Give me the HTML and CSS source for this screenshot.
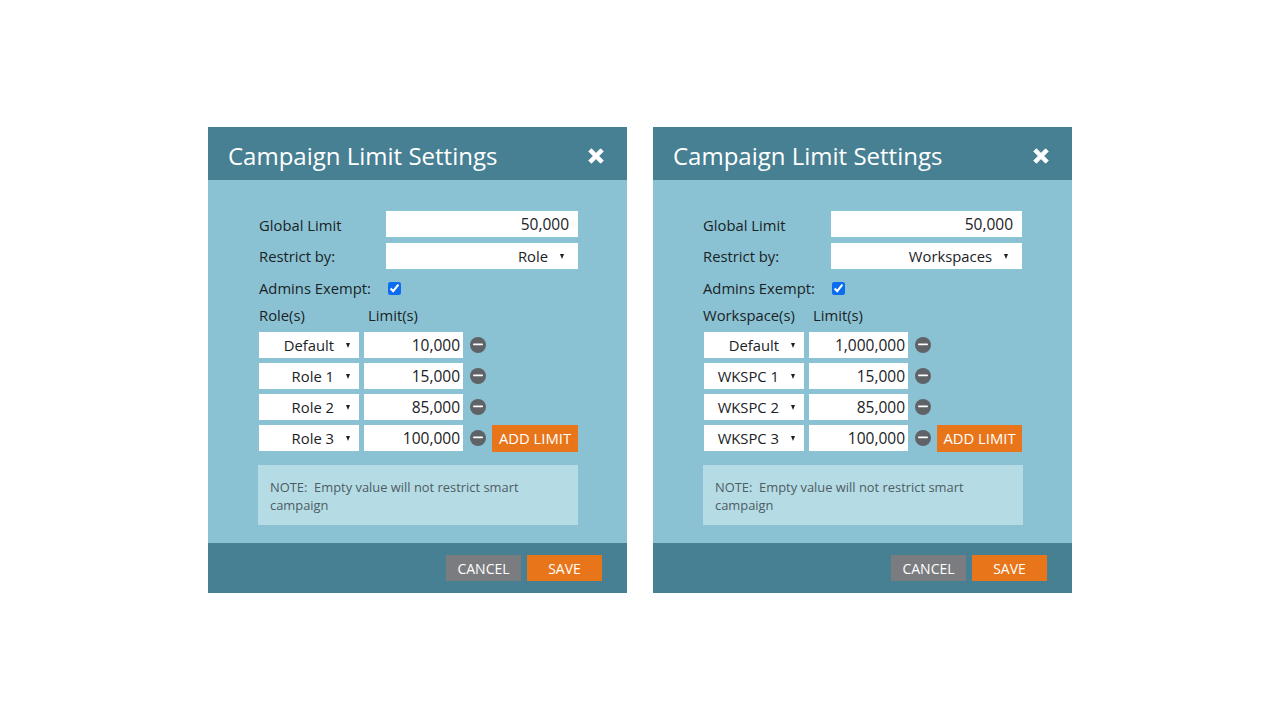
FILE: index.html
```html
<!DOCTYPE html>
<html lang="en">
  <head>
    <meta charset="UTF-8" />
    <meta name="viewport" content="width=device-width, initial-scale=1.0" />
    <title>Campaign Limit Settings</title>
    <link rel="stylesheet" href="styles.css">
  </head>
  <body>
    <div class="dialog">
      <div class="dialog-header">
        <h2>Campaign Limit Settings</h2>
        <svg class="close" viewBox="0 0 16 16" width="16" height="16"><path d="M3.4 0.8 L8 5.4 L12.6 0.8 L15.2 3.4 L10.6 8 L15.2 12.6 L12.6 15.2 L8 10.6 L3.4 15.2 L0.8 12.6 L5.4 8 L0.8 3.4 Z" fill="#fff" stroke="#fff" stroke-linejoin="round"/></svg>
      </div>
      <div class="dialog-body">
        <div class="field">
          <label>Global Limit</label>
          <div class="input wide">50,000</div>
        </div>
        <div class="field">
          <label>Restrict by:</label>
          <div class="select wide"><span>Role</span><i class="arrow"></i></div>
        </div>
        <div class="field">
          <label>Admins Exempt:</label>
          <input type="checkbox" class="check" checked />
        </div>
        <div class="col-labels">
          <span class="col-first">Role(s)</span>
          <span>Limit(s)</span>
        </div>
        <div class="limit-row">
          <div class="select small"><span>Default</span><i class="arrow"></i></div>
          <div class="input small">10,000</div>
          <svg class="minus" viewBox="0 0 16 16" width="16" height="16"><circle cx="8" cy="8" r="8" fill="#5f6368"/><rect x="3" y="6.6" width="10" height="1.6" rx="0.8" fill="#fff"/></svg>
        </div>
        <div class="limit-row">
          <div class="select small"><span>Role 1</span><i class="arrow"></i></div>
          <div class="input small">15,000</div>
          <svg class="minus" viewBox="0 0 16 16" width="16" height="16"><circle cx="8" cy="8" r="8" fill="#5f6368"/><rect x="3" y="6.6" width="10" height="1.6" rx="0.8" fill="#fff"/></svg>
        </div>
        <div class="limit-row">
          <div class="select small"><span>Role 2</span><i class="arrow"></i></div>
          <div class="input small">85,000</div>
          <svg class="minus" viewBox="0 0 16 16" width="16" height="16"><circle cx="8" cy="8" r="8" fill="#5f6368"/><rect x="3" y="6.6" width="10" height="1.6" rx="0.8" fill="#fff"/></svg>
        </div>
        <div class="limit-row">
          <div class="select small"><span>Role 3</span><i class="arrow"></i></div>
          <div class="input small">100,000</div>
          <svg class="minus" viewBox="0 0 16 16" width="16" height="16"><circle cx="8" cy="8" r="8" fill="#5f6368"/><rect x="3" y="6.6" width="10" height="1.6" rx="0.8" fill="#fff"/></svg>
          <button class="btn add">ADD LIMIT</button>
        </div>
        <div class="note">NOTE:&nbsp; Empty value will not restrict smart campaign</div>
      </div>
      <div class="dialog-footer">
        <button class="btn cancel">CANCEL</button>
        <button class="btn save">SAVE</button>
      </div>
    </div>

    <div class="dialog second">
      <div class="dialog-header">
        <h2>Campaign Limit Settings</h2>
        <svg class="close" viewBox="0 0 16 16" width="16" height="16"><path d="M3.4 0.8 L8 5.4 L12.6 0.8 L15.2 3.4 L10.6 8 L15.2 12.6 L12.6 15.2 L8 10.6 L3.4 15.2 L0.8 12.6 L5.4 8 L0.8 3.4 Z" fill="#fff" stroke="#fff" stroke-linejoin="round"/></svg>
      </div>
      <div class="dialog-body">
        <div class="field">
          <label>Global Limit</label>
          <div class="input wide">50,000</div>
        </div>
        <div class="field">
          <label>Restrict by:</label>
          <div class="select wide"><span>Workspaces</span><i class="arrow"></i></div>
        </div>
        <div class="field">
          <label>Admins Exempt:</label>
          <input type="checkbox" class="check" checked />
        </div>
        <div class="col-labels">
          <span class="col-first">Workspace(s)</span>
          <span>Limit(s)</span>
        </div>
        <div class="limit-row">
          <div class="select small"><span>Default</span><i class="arrow"></i></div>
          <div class="input small">1,000,000</div>
          <svg class="minus" viewBox="0 0 16 16" width="16" height="16"><circle cx="8" cy="8" r="8" fill="#5f6368"/><rect x="3" y="6.6" width="10" height="1.6" rx="0.8" fill="#fff"/></svg>
        </div>
        <div class="limit-row">
          <div class="select small"><span>WKSPC 1</span><i class="arrow"></i></div>
          <div class="input small">15,000</div>
          <svg class="minus" viewBox="0 0 16 16" width="16" height="16"><circle cx="8" cy="8" r="8" fill="#5f6368"/><rect x="3" y="6.6" width="10" height="1.6" rx="0.8" fill="#fff"/></svg>
        </div>
        <div class="limit-row">
          <div class="select small"><span>WKSPC 2</span><i class="arrow"></i></div>
          <div class="input small">85,000</div>
          <svg class="minus" viewBox="0 0 16 16" width="16" height="16"><circle cx="8" cy="8" r="8" fill="#5f6368"/><rect x="3" y="6.6" width="10" height="1.6" rx="0.8" fill="#fff"/></svg>
        </div>
        <div class="limit-row">
          <div class="select small"><span>WKSPC 3</span><i class="arrow"></i></div>
          <div class="input small">100,000</div>
          <svg class="minus" viewBox="0 0 16 16" width="16" height="16"><circle cx="8" cy="8" r="8" fill="#5f6368"/><rect x="3" y="6.6" width="10" height="1.6" rx="0.8" fill="#fff"/></svg>
          <button class="btn add">ADD LIMIT</button>
        </div>
        <div class="note">NOTE:&nbsp; Empty value will not restrict smart campaign</div>
      </div>
      <div class="dialog-footer">
        <button class="btn cancel">CANCEL</button>
        <button class="btn save">SAVE</button>
      </div>
    </div>
  </body>
</html>
```

FILE: styles.css
```css
html,
body {
  height: 100%;
}
body {
  margin: 0;
  background-color: #fff;
  display: flex;
  justify-content: center;
  align-items: center;
  gap: 26px;
  font-family: "Open Sans", sans-serif;
  font-size: 14.8px;
  color: #1a2226;
}
.dialog {
  width: 419px;
  height: 466px;
  display: flex;
  flex-direction: column;
  background-color: #8ac2d3;
}
.dialog-header {
  height: 53px;
  box-sizing: border-box;
  padding: 4px 23px 0 20px;
  display: flex;
  justify-content: space-between;
  align-items: center;
  background-color: #477f93;
}
h2 {
  margin: 0;
  font-size: 24px;
  font-weight: 400;
  color: #fff;
}
.dialog-body {
  flex: 1;
  padding: 31px 49px 0 51px;
}
.field {
  height: 26px;
  margin-bottom: 6px;
  display: flex;
  align-items: center;
}
.field label {
  width: 127px;
  flex-shrink: 0;
}
.field:first-child label {
  padding-top: 2px;
}
.input,
.select {
  height: 26px;
  display: flex;
  justify-content: flex-end;
  align-items: center;
  background-color: #fff;
}
.input {
  font-size: 15.5px;
}
.wide {
  width: 192px;
  padding-right: 9px;
  box-sizing: border-box;
}
.small {
  box-sizing: border-box;
}
.select.wide {
  padding-right: 14px;
}
.select.small {
  width: 100px;
  padding-right: 9px;
}
.input.small {
  width: 99px;
  margin-left: 5px;
  padding-right: 3px;
}
.arrow {
  width: 0;
  height: 0;
  margin-left: 12px;
  border-left: 2.5px solid transparent;
  border-right: 2.5px solid transparent;
  border-top: 5px solid #1a2226;
}
.check {
  width: 13px;
  height: 13px;
  margin: 0 0 0 2px;
  accent-color: #0b6cf0;
}
.col-labels {
  height: 22px;
  margin-top: -3px;
  margin-bottom: 6px;
  display: flex;
  align-items: center;
}
.col-first {
  min-width: 109px;
}
.limit-row {
  height: 26px;
  margin-bottom: 5px;
  display: flex;
  align-items: center;
}
.minus {
  margin-left: 7px;
  flex-shrink: 0;
}
.btn {
  border: none;
  padding: 0;
  font-family: "Open Sans", sans-serif;
  font-size: 14px;
  color: #fff;
}
.add {
  width: 86px;
  height: 27px;
  margin-left: 6px;
  font-size: 14.8px;
  background-color: #e9751b;
}
.note {
  box-sizing: border-box;
  width: 320px;
  height: 60px;
  margin: 14px 0 0 -1px;
  padding: 13px 12px;
  font-size: 12.9px;
  line-height: 18px;
  color: #4d5d63;
  background-color: #b5dbe5;
}
.dialog-footer {
  height: 50px;
  padding: 12px 25px 0 0;
  box-sizing: border-box;
  display: flex;
  justify-content: flex-end;
  gap: 6px;
  background-color: #477f93;
}
.dialog-footer .btn {
  width: 75px;
  height: 26px;
}
.cancel {
  background-color: #7a7c80;
}
.save {
  background-color: #e9751b;
}
.second .field label {
  width: 128px;
  margin-left: -1px;
}
.second .col-first {
  margin-left: -1px;
}
.second .col-labels > span:last-child {
  margin-left: 1px;
}
.second .wide {
  width: 191px;
}
.second .check {
  margin-left: 1px;
}
.second .add {
  width: 85px;
}
```
